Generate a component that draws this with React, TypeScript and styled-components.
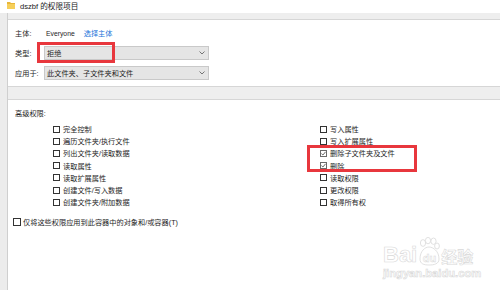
import React from 'react';
import styled, { createGlobalStyle } from 'styled-components';

const GlobalStyle = createGlobalStyle`
  html, body {
    margin: 0;
    padding: 0;
    background: #fff;
  }
  body {
    width: 500px;
    height: 290px;
    overflow: hidden;
    font-family: "Liberation Sans", "Noto Sans CJK SC", sans-serif;
    font-size: 7.2px;
    color: #1e1e1e;
  }
`;

const Window = styled.div`
  width: 500px;
  height: 290px;
  display: flex;
  flex-direction: column;
`;

const TitleBar = styled.div`
  height: 10px;
  padding: 0 0 3px 7px;
  display: flex;
  align-items: center;
  gap: 5px;
  font-size: 7.6px;
  color: #222;
  svg {
    width: 8px;
    height: 9px;
  }
`;

const Body = styled.div`
  flex: 1;
  display: flex;
`;

const Side = styled.div`
  width: 7px;
  background: #ececec;
  border-right: 1px solid #cfcfcf;
`;

const Main = styled.div`
  flex: 1;
  display: flex;
  flex-direction: column;
`;

const Band = styled.div<{ $h: number; $top?: boolean }>`
  height: ${(p) => p.$h}px;
  background: #eeeeee;
  border-bottom: 1px solid #d6d6d6;
  border-top: ${(p) => (p.$top ? '1px solid #d6d6d6' : 'none')};
`;

const PrincipalPanel = styled.div`
  height: 60px;
  padding: 6px 0 0 7px;
  display: flex;
  flex-direction: column;
  gap: 6px;
`;

const FieldRow = styled.div`
  height: 14px;
  display: flex;
  align-items: center;
`;

const Label = styled.div`
  width: 29px;
`;

const Plain = styled.span`
  margin-left: 2px;
  font-size: 6.8px;
`;

const Link = styled.span`
  margin-left: 9px;
  color: #1a73d9;
`;

const Select = styled.div`
  position: relative;
  box-sizing: border-box;
  width: 165px;
  height: 14px;
  background: #e5e5e5;
  border: 1px solid #c9c9c9;
  padding-left: 2px;
  display: flex;
  align-items: center;
  justify-content: space-between;
  svg {
    width: 6px;
    height: 4px;
    margin-right: 3px;
  }
`;

const Mark = styled.div`
  position: absolute;
  box-sizing: border-box;
  border: 3px solid #e8373d;
  pointer-events: none;
`;

const PermPanel = styled.div`
  position: relative;
  flex: 1;
  padding: 8px 0 0 5px;
`;

const Heading = styled.div`
  height: 12px;
  line-height: 12px;
  padding-left: 2px;
`;

const PermGrid = styled.div`
  position: relative;
  margin: 3px 0 0 40px;
  display: grid;
  grid-template-columns: 267px auto;
  grid-template-rows: repeat(7, 12.2px);
  grid-auto-flow: column;
`;

const Item = styled.label<{ $gap?: number }>`
  display: flex;
  align-items: center;
  gap: ${(p) => p.$gap ?? 3}px;
  white-space: nowrap;
`;

const Box = styled.span<{ $size?: number; $checked?: boolean }>`
  box-sizing: border-box;
  width: ${(p) => p.$size ?? 7}px;
  height: ${(p) => p.$size ?? 7}px;
  border: 1px solid ${(p) => (p.$checked ? '#6a6a6a' : '#333')};
  background: #fff;
  display: flex;
  align-items: center;
  justify-content: center;
  svg {
    width: 5px;
    height: 5px;
  }
`;

const InheritRow = styled.div`
  margin-top: 9px;
  height: 12px;
`;

const Watermark = styled.div`
  position: absolute;
  left: 375px;
  top: 137px;
  display: flex;
  flex-direction: column;
  align-items: flex-start;
  color: #fff;
  -webkit-text-stroke: 0.6px #d9d9d9;
  font-family: "Liberation Sans", "Noto Sans CJK SC", sans-serif;
`;

const LogoLine = styled.div`
  display: flex;
  align-items: flex-end;
  height: 29px;
`;

const LogoWord = styled.span<{ $size: number }>`
  font-size: ${(p) => p.$size}px;
  font-weight: bold;
  line-height: 1;
`;

const Paw = styled.svg`
  width: 22px;
  height: 29px;
  margin: 0 1px;
`;

const Domain = styled.div`
  margin-top: 2px;
  font-size: 11.2px;
  font-weight: bold;
  line-height: 1;
`;

const Folder = () => (
  <svg viewBox="0 0 8 9">
    <path d="M0 1 H3 L4 2 H8 V8 H0 Z" fill="#e8b63a" />
    <path d="M0 3 H8 V8 H0 Z" fill="#f6cf5a" />
  </svg>
);

const Chevron = () => (
  <svg viewBox="0 0 6 4">
    <path d="M0.5 0.5 L3 3 L5.5 0.5" fill="none" stroke="#666" strokeWidth="0.9" />
  </svg>
);

const Tick = () => (
  <svg viewBox="0 0 5 5">
    <path d="M0.4 2.6 L1.9 4 L4.6 0.8" fill="none" stroke="#555" strokeWidth="0.9" />
  </svg>
);

const Check = ({ label, checked, size, gap }: { label: string; checked?: boolean; size?: number; gap?: number }) => (
  <Item $gap={gap}>
    <Box $size={size} $checked={checked}>{checked && <Tick />}</Box>
    <span>{label}</span>
  </Item>
);

const perms: { label: string; checked?: boolean }[] = [
  { label: '完全控制' },
  { label: '遍历文件夹/执行文件' },
  { label: '列出文件夹/读取数据' },
  { label: '读取属性' },
  { label: '读取扩展属性' },
  { label: '创建文件/写入数据' },
  { label: '创建文件夹/附加数据' },
  { label: '写入属性' },
  { label: '写入扩展属性' },
  { label: '删除子文件夹及文件', checked: true },
  { label: '删除', checked: true },
  { label: '读取权限' },
  { label: '更改权限' },
  { label: '取得所有权' },
];

export default function App() {
  return (
    <Window>
      <GlobalStyle />
      <TitleBar>
        <Folder />
        <span>dszbf 的权限项目</span>
      </TitleBar>
      <Body>
        <Side />
        <Main>
          <Band $h={6} />
          <PrincipalPanel>
            <FieldRow>
              <Label>主体:</Label>
              <Plain>Everyone</Plain>
              <Link>选择主体</Link>
            </FieldRow>
            <FieldRow>
              <Label>类型:</Label>
              <Select>
                <span>拒绝</span>
                <Chevron />
                <Mark style={{ left: -8, top: -5, width: 78, height: 21 }} />
              </Select>
            </FieldRow>
            <FieldRow>
              <Label>应用于:</Label>
              <Select>
                <span>此文件夹、子文件夹和文件</span>
                <Chevron />
              </Select>
            </FieldRow>
          </PrincipalPanel>
          <Band $h={12} $top />
          <PermPanel>
            <Heading>高级权限:</Heading>
            <PermGrid>
              {perms.map((p) => (
                <Check key={p.label} label={p.label} checked={p.checked} />
              ))}
              <Mark style={{ left: 254, top: 22, width: 110, height: 27 }} />
            </PermGrid>
            <InheritRow>
              <Check label="仅将这些权限应用到此容器中的对象和/或容器(T)" size={8} gap={2} />
            </InheritRow>
            <Watermark>
              <LogoLine>
                <LogoWord $size={22}>Bai</LogoWord>
                <Paw viewBox="0 0 22 29">
                  <g fill="#fff" stroke="#d9d9d9" strokeWidth="0.8">
                    <ellipse cx="5" cy="6" rx="2.6" ry="3.4" />
                    <ellipse cx="10" cy="3.6" rx="2.6" ry="3.2" />
                    <ellipse cx="15.5" cy="4.2" rx="2.6" ry="3.2" />
                    <ellipse cx="19" cy="9" rx="2.4" ry="3" />
                    <path d="M2 22 C2 14 7 10 11 10 C15 10 21 14 21 22 C21 27 16 28 11 28 C6 28 2 27 2 22 Z" />
                  </g>
                  <text x="11.5" y="25" textAnchor="middle" fontSize="11" fontWeight="bold" fontFamily="Liberation Sans, sans-serif" fill="#fff" stroke="#d9d9d9" strokeWidth="0.5">du</text>
                </Paw>
                <LogoWord $size={16}>经验</LogoWord>
              </LogoLine>
              <Domain>jingyan.baidu.com</Domain>
            </Watermark>
          </PermPanel>
        </Main>
      </Body>
    </Window>
  );
}
